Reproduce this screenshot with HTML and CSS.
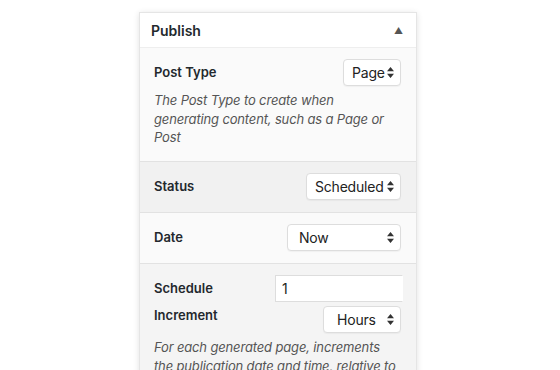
FILE: index.html
```html
<!DOCTYPE html>
<html lang="en">
<head>
  <meta charset="UTF-8" />
  <title>Publish</title>
  <link rel="stylesheet" href="styles.css">
</head>
<body>

<div class="panel">
  <div class="panel-header">
    <h2>Publish</h2>
    <span class="toggle">&#9650;</span>
  </div>

  <div class="section section-light section-type">
    <div class="row">
      <label for="post-type">Post Type</label>
      <span class="select-wrap">
        <select id="post-type" class="select-page">
          <option>Page</option>
          <option>Post</option>
        </select>
        <svg class="arrows" width="7" height="11" viewBox="0 0 7 11"><path d="M3.5 0L7 4.2H0z M3.5 11L0 6.8h7z" fill="#333"/></svg>
      </span>
    </div>
    <p class="description">The Post Type to create when generating content, such as a Page or Post</p>
  </div>

  <div class="section section-grey">
    <div class="row">
      <label for="status">Status</label>
      <span class="select-wrap">
        <select id="status" class="select-status">
          <option>Scheduled</option>
          <option>Draft</option>
          <option>Published</option>
        </select>
        <svg class="arrows" width="7" height="11" viewBox="0 0 7 11"><path d="M3.5 0L7 4.2H0z M3.5 11L0 6.8h7z" fill="#333"/></svg>
      </span>
    </div>
  </div>

  <div class="section section-light">
    <div class="row">
      <label for="date">Date</label>
      <span class="select-wrap">
        <select id="date" class="select-date">
          <option>Now</option>
          <option>Specific Date</option>
        </select>
        <svg class="arrows" width="7" height="11" viewBox="0 0 7 11"><path d="M3.5 0L7 4.2H0z M3.5 11L0 6.8h7z" fill="#333"/></svg>
      </span>
    </div>
  </div>

  <div class="section section-schedule">
    <div class="row">
      <label for="schedule">Schedule</label>
      <input type="text" id="schedule" class="input-schedule" value="1" />
    </div>
    <div class="row row-tight">
      <label for="increment" class="label-top">Increment</label>
      <span class="select-wrap">
        <select id="increment" class="select-increment">
          <option>Hours</option>
          <option>Days</option>
        </select>
        <svg class="arrows" width="7" height="11" viewBox="0 0 7 11"><path d="M3.5 0L7 4.2H0z M3.5 11L0 6.8h7z" fill="#333"/></svg>
      </span>
    </div>
    <p class="description">For each generated page, increments the publication date and time, relative to</p>
  </div>
</div>

</body>
</html>
```

FILE: styles.css
```css
body {
  margin: 0;
  background: #fff;
  font-family: 'Inter', 'Open Sans', sans-serif;
  color: #23282d;
}

.panel {
  margin: 12px 0 0 139px;
  width: 276px;
  border: 1px solid #e5e5e5;
  border-bottom: none;
  box-shadow: 0 1px 6px rgba(0, 0, 0, 0.12);
  background: #fff;
}

.panel-header {
  display: flex;
  justify-content: space-between;
  align-items: center;
  height: 34px;
  padding: 0 13px 0 11px;
  border-bottom: 1px solid #eee;
}

.panel-header h2 {
  margin: 0;
  font-size: 14px;
  font-weight: 600;
}

.toggle {
  font-size: 9px;
  color: #555;
}

.section {
  padding: 11px 15px 12px 14px;
  border-bottom: 1px solid #e2e2e2;
}

.section-type {
  height: 90px;
}

.section-light {
  background: #fafafa;
}

.section-grey {
  background: #f1f1f1;
}

.section-schedule {
  background: #f4f4f4;
}

.row {
  display: flex;
  justify-content: space-between;
  align-items: center;
}

.row-tight {
  margin-top: 4px;
}

label {
  font-size: 13px;
  font-weight: 600;
  color: #23282d;
  padding-bottom: 2px;
}

.label-top {
  align-self: flex-start;
  padding-top: 1px;
}

.select-wrap {
  position: relative;
  display: flex;
}

select {
  appearance: none;
  -webkit-appearance: none;
  height: 27px;
  padding: 0 4px 0 8px;
  border: 1px solid #ddd;
  border-radius: 4px;
  background: #fff;
  font-family: 'Inter', 'Open Sans', sans-serif;
  font-size: 14px;
  letter-spacing: -0.2px;
  color: #222;
  box-shadow: 0 1px 1px rgba(0, 0, 0, 0.04);
}

.arrows {
  position: absolute;
  right: 7px;
  top: 8px;
  pointer-events: none;
}

.select-page {
  width: 58px;
}

.select-status {
  width: 95px;
}

.select-date {
  width: 114px;
  padding-left: 11px;
}

.select-increment {
  width: 78px;
  padding-left: 13px;
}

.input-schedule {
  width: 128px;
  height: 27px;
  box-sizing: border-box;
  margin-right: -2px;
  padding: 0 6px;
  border: 1px solid #ddd;
  border-right-color: transparent;
  background: #fff;
  font-family: 'Inter', 'Open Sans', sans-serif;
  font-size: 14px;
  color: #222;
}

.description {
  margin: 5px 0 0;
  font-size: 13px;
  font-style: italic;
  line-height: 18.5px;
  letter-spacing: -0.15px;
  color: #555;
}
```
